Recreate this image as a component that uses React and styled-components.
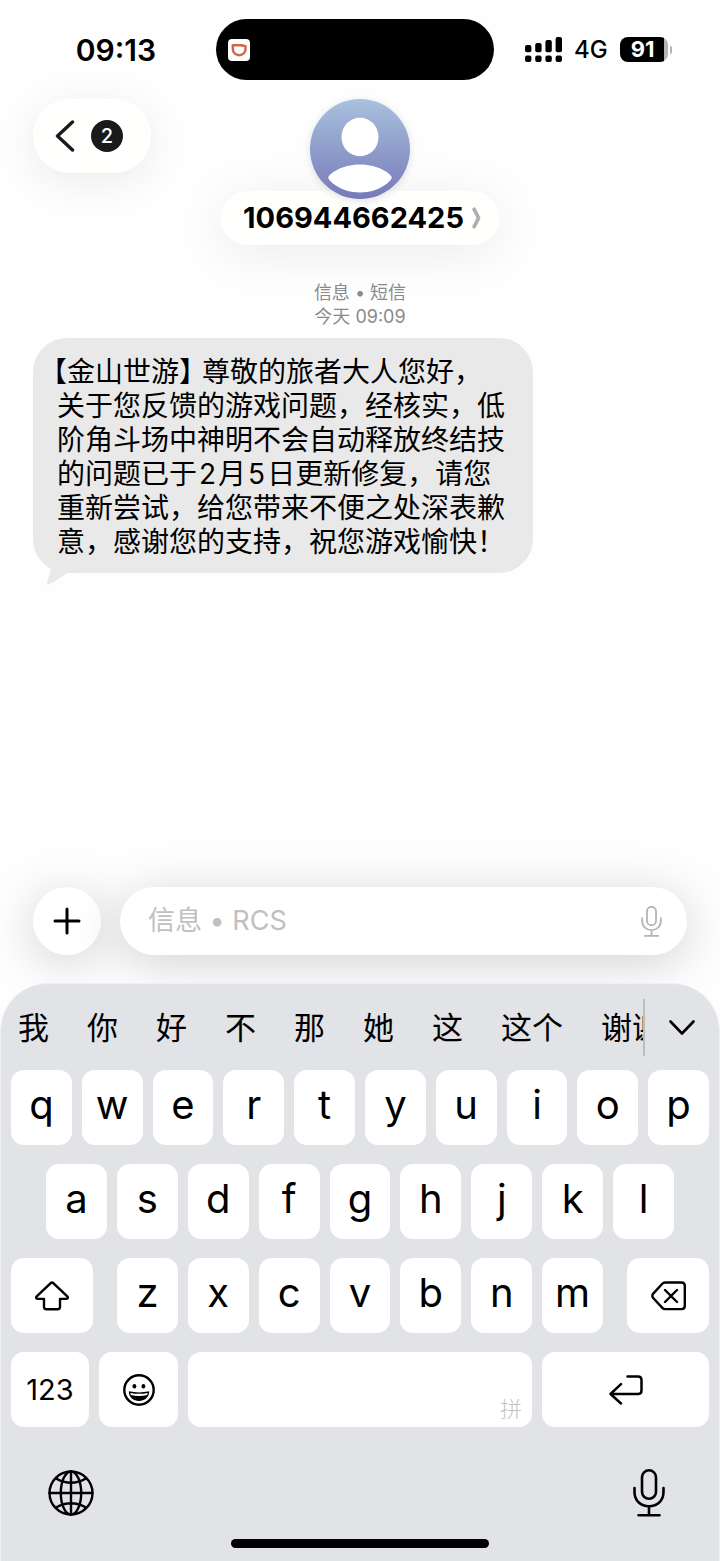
import React from "react";
import styled, { createGlobalStyle } from "styled-components";

const GlobalStyle = createGlobalStyle`
  * {
    box-sizing: border-box;
  }
  body {
    margin: 0;
    background: #fefefe;
    color: #000;
    font-family: Inter, "Noto Sans CJK SC", sans-serif;
  }
  button, input {
    font: inherit;
    color: inherit;
    border: none;
    padding: 0;
    margin: 0;
  }
  svg {
    display: block;
    flex: none;
  }
`;

const Screen = styled.div`
  min-height: 100vh;
  display: flex;
  flex-direction: column;
  overflow: hidden;
`;

const StatusBar = styled.div`
  display: grid;
  grid-template-columns: 1fr 278px 1fr;
  align-items: center;
  padding: 19px 10px 0 0;
`;

const Time = styled.time`
  padding-left: 16px;
  text-align: center;
  font-size: 30px;
  line-height: 36px;
  font-weight: 600;
`;

const Island = styled.div`
  height: 61px;
  border-radius: 31px;
  background: #000;
  display: flex;
  align-items: center;
  padding-left: 12px;
`;

const AppBadge = styled.span`
  width: 22px;
  height: 22px;
  border-radius: 4px;
  background: #fff;
`;

const StatusRight = styled.div`
  display: flex;
  align-items: center;
  gap: 12px;
  padding-left: 31px;
`;

const Network = styled.span`
  font-size: 24px;
  line-height: 30px;
  font-weight: 500;
`;

const Battery = styled.div`
  display: flex;
  align-items: center;
  gap: 2px;
`;

const BatteryLevel = styled.span`
  width: 48px;
  height: 25px;
  padding-right: 2px;
  border-radius: 8px;
  background: linear-gradient(to right, #000 91%, #b3b3b3 91%);
  color: #fff;
  font-size: 22px;
  line-height: 25px;
  font-weight: 700;
  text-align: center;
`;

const BatteryTip = styled.span`
  width: 2px;
  height: 8px;
  border-radius: 0 2px 2px 0;
  background: #b3b3b3;
`;

const Header = styled.header`
  display: grid;
  grid-template-columns: 1fr auto 1fr;
  align-items: start;
  padding: 19px 33px 0;
`;

const BackButton = styled.button`
  width: 118px;
  height: 74px;
  border-radius: 37px;
  background: #fffffe;
  box-shadow: 0 8px 44px rgba(0, 0, 0, 0.08);
  display: flex;
  align-items: center;
  gap: 16px;
  padding-left: 22px;
`;

const UnreadCount = styled.span`
  width: 32px;
  height: 32px;
  border-radius: 50%;
  background: #1a1a1a;
  color: #fff;
  font-size: 20px;
  line-height: 32px;
  font-weight: 500;
  text-align: center;
`;

const Contact = styled.div`
  display: flex;
  flex-direction: column;
  align-items: center;
`;

const Avatar = styled.div`
  z-index: 1;
  border-radius: 50%;
  box-shadow: 0 2px 8px rgba(0, 0, 0, 0.12);
`;

const ContactName = styled.button`
  height: 54px;
  margin-top: -8px;
  padding: 0 18px 0 22px;
  border-radius: 27px;
  background: #fffffe;
  box-shadow: 0 8px 50px rgba(0, 0, 0, 0.08);
  display: flex;
  align-items: center;
  gap: 8px;
  font-size: 29px;
  line-height: 34px;
  font-weight: 700;
`;

const Messages = styled.main`
  flex: 1;
  padding: 36px 33px 0;
`;

const Meta = styled.p`
  margin: 0 0 9px;
  color: #8a8a8d;
  font-size: 18px;
  line-height: 24px;
  text-align: center;
`;

const Bubble = styled.div`
  position: relative;
  width: fit-content;
  max-width: 500px;
  padding: 17px 24px 14px;
  border-radius: 34px;
  background: #e9e9e9;
  font-size: 28px;
  line-height: 34px;
`;

const BubbleTail = styled.svg`
  position: absolute;
  left: 12px;
  bottom: -12px;
`;

const MessageText = styled.p`
  margin: 0;
`;

const Sender = styled.span`
  margin: 0 9px 0 -4px;
  font-feature-settings: "halt";
`;

const Digit = styled.span`
  margin: 0 2px;
`;

const Composer = styled.form`
  display: flex;
  gap: 19px;
  padding: 0 33px 28px;
`;

const PlusButton = styled.button`
  width: 68px;
  height: 68px;
  border-radius: 50%;
  background: #fff;
  box-shadow: 0 8px 50px rgba(0, 0, 0, 0.18);
  display: flex;
  align-items: center;
  justify-content: center;
`;

const Field = styled.div`
  flex: 1;
  height: 68px;
  padding: 0 25px 0 28px;
  border-radius: 34px;
  background: #fff;
  box-shadow: 0 8px 50px rgba(0, 0, 0, 0.18);
  display: flex;
  align-items: center;
`;

const MessageInput = styled.input`
  flex: 1;
  min-width: 0;
  background: none;
  outline: none;
  font-size: 27px;
  line-height: 36px;
  &::placeholder {
    color: #c0c0c1;
    opacity: 1;
  }
`;

const IconButton = styled.button`
  background: none;
  color: ${(props) => props.$color || "#000"};
`;

const Keyboard = styled.section`
  position: relative;
  background: #e2e3e6;
  border: 1px solid #eff0f2;
  border-bottom: none;
  border-radius: 48px 48px 0 0;
  padding: 15px 10px 0;
`;

const CandidateBar = styled.div`
  display: flex;
  align-items: center;
  margin-bottom: 14px;
`;

const Candidates = styled.div`
  flex: 1;
  min-width: 0;
  height: 57px;
  padding-left: 7px;
  border-right: 2px solid #bcbdc0;
  display: flex;
  align-items: center;
  gap: 38px;
  overflow: hidden;
`;

const Candidate = styled.button`
  flex: none;
  background: none;
  font-size: 31px;
  line-height: 57px;
`;

const ExpandButton = styled.button`
  width: 64px;
  height: 57px;
  padding-left: 10px;
  background: none;
  display: flex;
  align-items: center;
  justify-content: center;
`;

const Keys = styled.div`
  display: grid;
  gap: 19px;
`;

const KeyRow = styled.div`
  display: grid;
  grid-template-columns: ${(props) => props.$columns};
  gap: ${(props) => props.$gap || 10}px;
  padding: 0 ${(props) => props.$inset || 0}px;
`;

const Key = styled.button`
  min-width: 0;
  height: 75px;
  border-radius: 13px;
  background: #fff;
  display: flex;
  align-items: center;
  justify-content: center;
  font-size: 29px;
  line-height: 36px;
`;

const LetterKey = styled(Key)`
  padding-bottom: 6px;
  font-size: 40px;
  line-height: 48px;
`;

const SpaceKey = styled(Key)`
  align-items: flex-end;
  justify-content: flex-end;
  padding: 0 10px 3px 0;
  color: #c4c4c6;
  font-size: 22px;
  line-height: 30px;
  font-weight: 300;
`;

const KeyboardFooter = styled.div`
  display: flex;
  align-items: center;
  justify-content: space-between;
  padding: 42px 44px 22px 37px;
`;

const HomeIndicator = styled.div`
  width: 258px;
  height: 9px;
  margin: 0 auto 13px;
  border-radius: 5px;
  background: #000;
`;

const Stroke = ({ width, height, weight = 2, children, ...rest }) => (
  <svg
    width={width}
    height={height}
    fill="none"
    stroke="currentColor"
    strokeWidth={weight}
    strokeLinecap="round"
    strokeLinejoin="round"
    aria-hidden="true"
    {...rest}
  >
    {children}
  </svg>
);

const MicIcon = ({ width, height, weight }) => (
  <Stroke width={width} height={height} weight={weight} viewBox="0 0 32 48">
    <rect x="9" y="1.3" width="14" height="28.5" rx="7" />
    <path d="M1.5 19v4C1.5 32 8 37.3 16 37.3S30.5 32 30.5 23v-4M16 37.3V46M5.5 46.3h21" />
  </Stroke>
);

const AppLogo = () => (
  <svg width="22" height="22" viewBox="0 0 22 22" fill="none" stroke="#d0694a" strokeWidth="2.5">
    <path d="M4.8 6.3H13.5L17.5 7.3V9.8C17.5 13.600 14.800 16.200 11.200 16.200S4.800 13.600 4.800 9.800Z" strokeLinejoin="round" />
  </svg>
);

const SignalIcon = () => (
  <svg width="37" height="26" viewBox="0 0 37 26" aria-label="signal">
    <rect x="0" y="8" width="6.4" height="7.3" rx="2" />
    <rect x="10.2" y="6" width="6.4" height="9.3" rx="2" />
    <rect x="20.4" y="3" width="6.4" height="12.3" rx="2" />
    <rect x="30.6" y="0" width="6.4" height="15.3" rx="2" />
    <rect x="0" y="18.5" width="6.4" height="6.5" rx="2" />
    <rect x="10.2" y="18.5" width="6.4" height="6.5" rx="2" />
    <rect x="20.4" y="18.5" width="6.4" height="6.5" rx="2" />
    <rect x="30.6" y="18.5" width="6.4" height="6.5" rx="2" />
  </svg>
);

const AvatarIcon = () => (
  <svg width="100" height="100" viewBox="0 0 100 100">
    <defs>
      <linearGradient id="avatar" x1="0" y1="0" x2="0" y2="1">
        <stop offset="0" stopColor="#a9c1de" />
        <stop offset="1" stopColor="#767ab8" />
      </linearGradient>
    </defs>
    <circle cx="50" cy="50" r="50" fill="url(#avatar)" />
    <ellipse cx="50" cy="38" rx="18.5" ry="19.3" fill="#fff" />
    <path
      d="M18.3 78.5C18.3 75.5 31 65.5 50 65.5S81.7 75.5 81.7 78.5C81.7 82 69 93.5 50 93.5S18.3 82 18.3 78.5Z"
      fill="#fff"
    />
  </svg>
);

const ShiftIcon = () => (
  <Stroke width={34} height={30} weight={2.4}>
    <path d="M16 1.8q1-.8 2 0L32.3 15.4q1.5 2.3-1 2.5H25v7.8q0 2.5-2.5 2.5h-11Q9 28.2 9 25.7v-7.8H2.7q-2.5-.2-1-2.5Z" />
  </Stroke>
);

const DeleteIcon = () => (
  <Stroke width={35} height={30} weight={2.4}>
    <path d="M14 1.5h16.5q3.3 0 3.3 3.3v20q0 3.3-3.3 3.3H14q-1.6 0-2.7-1.2L2 16.7q-1.3-1.9 0-3.8L11.3 2.7Q12.4 1.5 14 1.5ZM14 9l12 12M26 9L14 21" />
  </Stroke>
);

const ReturnIcon = () => (
  <Stroke width={34} height={30} weight={2.5}>
    <path d="M18.5 1.5H29q3.5 0 3.5 3.5v10.5q0 3.5-3.5 3.5H1.5M12 9.2L1.5 19 12 28.5" />
  </Stroke>
);

const EmojiIcon = () => (
  <svg width="32" height="32" viewBox="0 0 32 32" aria-hidden="true">
    <circle cx="16" cy="16" r="14.7" fill="none" stroke="#000" strokeWidth="2.4" />
    <ellipse cx="11.4" cy="12.3" rx="1.9" ry="2.2" />
    <ellipse cx="20.4" cy="12.3" rx="1.9" ry="2.2" />
    <path d="M5.8 17.3Q16 19.6 26.2 17.3C26.2 23.5 21.5 27 16 27S5.8 23.5 5.8 17.3Z" />
    <path d="M7.3 18.9Q16 20.8 24.7 18.9L24.2 20.9Q16 23.2 7.8 20.9Z" fill="#fff" />
  </svg>
);

const GlobeIcon = () => (
  <Stroke width={46} height={46} weight={2.4}>
    <circle cx="23" cy="23" r="21.5" />
    <ellipse cx="23" cy="23" rx="10.2" ry="21.5" />
    <path d="M23 1.5v43M1.5 23h43M8 8.5q15 8.5 30 0M8 37.5q15-8.5 30 0" />
  </Stroke>
);

const candidates = ["我", "你", "好", "不", "那", "她", "这", "这个", "谢谢"];

const Letters = ({ letters }) =>
  letters.split("").map((letter) => (
    <LetterKey type="button" key={letter}>
      {letter}
    </LetterKey>
  ));

const App = () => {
  return (
    <Screen>
      <GlobalStyle />
      <StatusBar>
        <Time>09:13</Time>
        <Island>
          <AppBadge>
            <AppLogo />
          </AppBadge>
        </Island>
        <StatusRight>
          <SignalIcon />
          <Network>4G</Network>
          <Battery>
            <BatteryLevel>91</BatteryLevel>
            <BatteryTip />
          </Battery>
        </StatusRight>
      </StatusBar>
      <Header>
        <BackButton type="button" aria-label="返回">
          <Stroke width={20} height={32} weight={3.4} color="#1a1a1a">
            <path d="M17.5 2L2.5 16l15 14" />
          </Stroke>
          <UnreadCount>2</UnreadCount>
        </BackButton>
        <Contact>
          <Avatar>
            <AvatarIcon />
          </Avatar>
          <ContactName type="button">
            106944662425
            <Stroke width={9} height={22} weight={3.8} color="#b0b0b0">
              <path d="M2.2 2.3Q4.5 6.5 6.5 11 4.5 15.5 2.2 19.7" />
            </Stroke>
          </ContactName>
        </Contact>
      </Header>
      <Messages>
        <Meta>
          信息 • 短信
          <br />
          今天 09:09
        </Meta>
        <Bubble>
          <MessageText>
            <Sender>【金山世游】</Sender>尊敬的旅者大人您好，
            <br />
            关于您反馈的游戏问题，经核实，低阶角斗场中神明不会自动释放终结技
            <br />
            的问题已于<Digit>2</Digit>月<Digit>5</Digit>日更新修复，请您
            <br />
            重新尝试，给您带来不便之处深表歉意，感谢您的支持，祝您游戏愉快！
          </MessageText>
          <BubbleTail width="32" height="24" viewBox="0 0 32 24" fill="#e9e9e9">
            <path d="M0 0C3 4 5.5 5.5 5.5 8c0 4-1.5 8-3.5 13-.8 2 .2 3 2 2.3C10 21 16 16 22 12L32 11V0Z" />
          </BubbleTail>
        </Bubble>
      </Messages>
      <Composer>
        <PlusButton type="button" aria-label="添加">
          <Stroke width={28} height={28} weight={3}>
            <path d="M14 2v24M2 14h24" />
          </Stroke>
        </PlusButton>
        <Field>
          <MessageInput type="text" aria-label="信息" placeholder="信息 • RCS" />
          <IconButton type="button" aria-label="听写" $color="#b5b5b9">
            <MicIcon width={21} height={31} weight={2.8} />
          </IconButton>
        </Field>
      </Composer>
      <Keyboard>
        <CandidateBar>
          <Candidates>
            {candidates.map((word) => (
              <Candidate type="button" key={word}>
                {word}
              </Candidate>
            ))}
          </Candidates>
          <ExpandButton type="button" aria-label="展开">
            <Stroke width={26} height={16} weight={2.6}>
              <path d="M1.5 1.5L13 13.5 24.5 1.5" />
            </Stroke>
          </ExpandButton>
        </CandidateBar>
        <Keys>
          <KeyRow $columns="repeat(10, 1fr)">
            <Letters letters="qwertyuiop" />
          </KeyRow>
          <KeyRow $columns="repeat(9, 1fr)" $inset={35}>
            <Letters letters="asdfghjkl" />
          </KeyRow>
          <KeyRow $columns="82fr 486fr 82fr" $gap={24}>
            <Key type="button" aria-label="shift">
              <ShiftIcon />
            </Key>
            <KeyRow $columns="repeat(7, 1fr)">
              <Letters letters="zxcvbnm" />
            </KeyRow>
            <Key type="button" aria-label="删除">
              <DeleteIcon />
            </Key>
          </KeyRow>
          <KeyRow $columns="78fr 79fr 344fr 167fr">
            <Key type="button">123</Key>
            <Key type="button" aria-label="表情">
              <EmojiIcon />
            </Key>
            <SpaceKey type="button">拼</SpaceKey>
            <Key type="button" aria-label="换行">
              <ReturnIcon />
            </Key>
          </KeyRow>
        </Keys>
        <KeyboardFooter>
          <IconButton type="button" aria-label="切换键盘">
            <GlobeIcon />
          </IconButton>
          <IconButton type="button" aria-label="语音输入">
            <MicIcon width={32} height={48} weight={2.6} />
          </IconButton>
        </KeyboardFooter>
        <HomeIndicator />
      </Keyboard>
    </Screen>
  );
};

export default App;
